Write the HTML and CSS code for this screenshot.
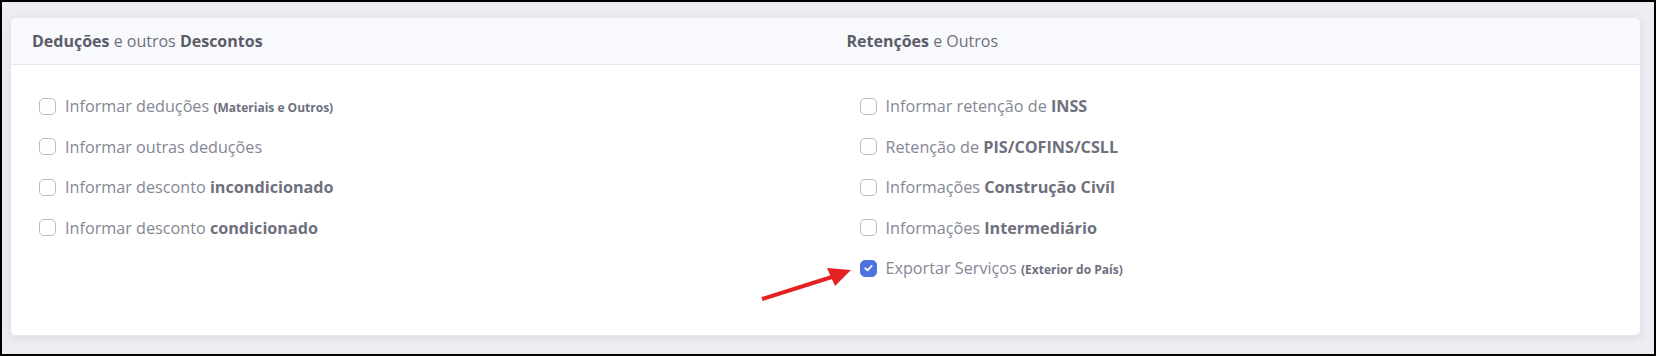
FILE: index.html
```html
<!DOCTYPE html>
<html lang="pt-BR">
<head>
<meta charset="utf-8">
<link rel="stylesheet" href="styles.css">
</head>
<body>
<div class="frame">
  <div class="card">
    <div class="card-header">
      <div class="col col-left"><b>Deduções</b> e outros <b>Descontos</b></div>
      <div class="col col-right"><b>Retenções</b> e Outros</div>
    </div>
    <div class="card-body">
      <div class="col col-left">
        <label class="check"><span class="box"></span><span class="txt">Informar deduções <small>(Materiais e Outros)</small></span></label>
        <label class="check"><span class="box"></span><span class="txt">Informar outras deduções</span></label>
        <label class="check"><span class="box"></span><span class="txt">Informar desconto <b>incondicionado</b></span></label>
        <label class="check"><span class="box"></span><span class="txt">Informar desconto <b>condicionado</b></span></label>
      </div>
      <div class="col col-right">
        <label class="check"><span class="box"></span><span class="txt">Informar retenção de <b>INSS</b></span></label>
        <label class="check"><span class="box"></span><span class="txt">Retenção de <b>PIS/COFINS/CSLL</b></span></label>
        <label class="check"><span class="box"></span><span class="txt">Informações <b>Construção Civíl</b></span></label>
        <label class="check"><span class="box"></span><span class="txt">Informações <b>Intermediário</b></span></label>
        <label class="check"><span class="box checked"><svg viewBox="0 0 16 16" width="16" height="16"><path d="M4.6 8.3 L7 10.5 L11.4 5.8" fill="none" stroke="#fff" stroke-width="1.9" stroke-linecap="round" stroke-linejoin="round"/></svg></span><span class="txt">Exportar Serviços <small>(Exterior do País)</small></span></label>
      </div>
    </div>
    <svg class="arrow" width="100" height="40" viewBox="0 0 100 40">
      <line x1="3" y1="33" x2="76" y2="10" stroke="#e52222" stroke-width="4"/>
      <polygon points="92,4 68,2 76,20" fill="#e52222"/>
    </svg>
  </div>
</div>
</body>
</html>
```

FILE: styles.css
```css
* { box-sizing: border-box; }
html, body { margin: 0; padding: 0; background: #000; }
body { font-family: "Open Sans", "Noto Sans", sans-serif; }

.frame {
  width: 1656px;
  height: 356px;
  border: 2px solid #000;
  background: #eceef3;
  padding: 15px 13px 18px 8px;
}

.card {
  position: relative;
  height: 100%;
  background: #fff;
  border: 1px solid #e3e6f0;
  border-radius: 6px;
  box-shadow: 0 2px 10px rgba(58, 59, 69, 0.10);
}

.card-header {
  display: grid;
  grid-template-columns: 1fr 1fr;
  height: 47px;
  align-items: center;
  background: #f8f9fc;
  border-bottom: 1px solid #e3e6f0;
  border-radius: 6px 6px 0 0;
  font-size: 16px;
  color: #6e707e;
}
.card-header b { color: #5a5c69; font-weight: 700; }
.card-header .col-left { padding-left: 21px; }
.card-header .col-right { padding-left: 21px; }

.card-body {
  display: grid;
  grid-template-columns: 1fr 1fr;
  padding-top: 29px;
}
.card-body .col { display: flex; flex-direction: column; gap: 16.5px; }
.card-body .col-left { padding-left: 28px; }
.card-body .col-right { padding-left: 34px; }

.check {
  display: flex;
  align-items: center;
  height: 24px;
  gap: 9px;
  color: #858796;
  font-size: 16.2px;
}
.check b { color: #6e707e; font-weight: 700; }
.check small { color: #6e707e; font-weight: 700; font-size: 12px; }

.box {
  width: 17px;
  height: 17px;
  flex: none;
  border: 1px solid #b7b9cc;
  border-radius: 5px;
  background: #fff;
  display: flex;
  align-items: center;
  justify-content: center;
}
.box.checked {
  background: #4e73df;
  border-color: #4e73df;
}
.box svg { display: block; }

.arrow {
  position: absolute;
  left: 748px;
  top: 248px;
}
```
